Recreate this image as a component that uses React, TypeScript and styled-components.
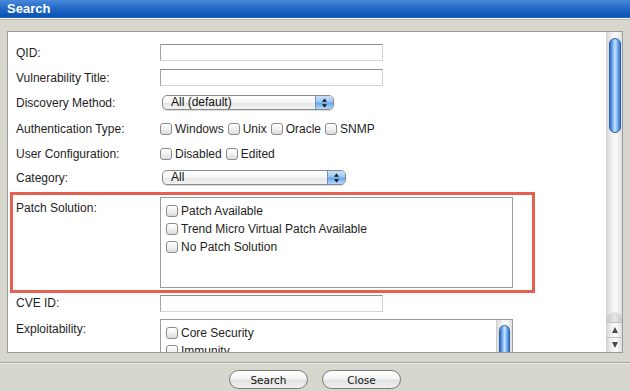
import React from "react";
import styled, { createGlobalStyle } from "styled-components";

const GlobalStyle = createGlobalStyle`
  html, body { margin: 0; padding: 0; background: #d8d7cd; }
  body {
    font-family: "Liberation Sans", Arial, sans-serif;
    font-size: 12px;
    color: #1e1e1e;
  }
`;

const Window = styled.div`
  width: 630px;
  height: 391px;
  display: flex;
  flex-direction: column;
  overflow: hidden;
  background: #d8d7cd;
`;
const TitleBar = styled.div`
  flex: none;
  height: 18px;
  line-height: 18px;
  padding-left: 7px;
  color: #fff;
  font-weight: bold;
  font-size: 13px;
  background: linear-gradient(#4a89d9, #2569c6 45%, #0a54b4 90%, #2b6bc2);
  border-bottom: 1px solid #f4f4f0;
  box-shadow: 0 1px 0 #bdbcb2;
`;
const Body = styled.div`
  flex: none;
  padding: 12px 7px 0;
`;
const Panel = styled.div`
  height: 322px;
  box-sizing: border-box;
  border: 1px solid #9b9b9b;
  background: #fff;
  display: flex;
`;
const Content = styled.div`
  flex: 1;
  overflow: hidden;
  padding-top: 8px;
`;
const Row = styled.div<{ $h: number; $top?: number }>`
  display: flex;
  align-items: center;
  height: ${p => p.$h}px;
  margin-top: ${p => p.$top || 0}px;
  padding-left: 8px;
`;
const TopRow = styled.div<{ $top?: number }>`
  display: flex;
  align-items: flex-start;
  margin-top: ${p => p.$top || 0}px;
  padding-left: 8px;
`;
const Label = styled.div<{ $pad?: number }>`
  width: 144px;
  flex: none;
  line-height: 14px;
  padding-top: ${p => p.$pad || 0}px;
`;
const Highlight = styled.div`
  width: 525px;
  height: 101px;
  box-sizing: border-box;
  margin: 2px 0 0 2px;
  border: 3px solid #e4614f;
  padding: 2px 0 0 3px;
  display: flex;
  align-items: flex-start;
`;
const TextInput = styled.div`
  width: 223px;
  height: 17px;
  box-sizing: border-box;
  border: 1px solid;
  border-color: #8e8e8e #cfcfcf #d4d4d4 #a4a4a4;
  background: #fff;
`;
const Select = styled.div<{ $w: number }>`
  width: ${p => p.$w}px;
  height: 15px;
  box-sizing: border-box;
  margin-left: 2px;
  border: 1px solid #8a8a8a;
  border-radius: 5px;
  display: flex;
  overflow: hidden;
  background: linear-gradient(#ffffff, #f6f6f6 50%, #e6e6e6 55%, #f2f2f2);
  box-shadow: 0 1px 1px rgba(0, 0, 0, 0.15);
`;
const SelectText = styled.span`
  flex: 1;
  padding-left: 8px;
  font-size: 12px;
  line-height: 13px;
  color: #111;
`;
const SelectArrow = styled.span`
  width: 17px;
  flex: none;
  display: flex;
  align-items: center;
  justify-content: center;
  border-left: 1px solid #6f93c6;
  background: linear-gradient(#c9e2fb, #9cc6f3 45%, #6aa6ea 55%, #b3d8ff);
`;
const ListBox = styled.div<{ $h: number }>`
  width: 353px;
  height: ${p => p.$h}px;
  box-sizing: border-box;
  border: 1px solid #9c9c9c;
  background: #fff;
  display: flex;
  overflow: hidden;
`;
const ListItems = styled.div`
  flex: 1;
  padding: 4px 0 0 5px;
`;
const CheckRow = styled.div`
  display: flex;
  align-items: center;
  gap: 4px;
`;
const CheckItem = styled.label<{ $h?: number }>`
  display: flex;
  align-items: center;
  gap: 3px;
  height: ${p => p.$h || 14}px;
  white-space: nowrap;
`;
const Box = styled.span`
  width: 12px;
  height: 12px;
  box-sizing: border-box;
  flex: none;
  border: 1px solid #8b8b8b;
  border-radius: 3px;
  background: linear-gradient(#ffffff, #f1f1f1 50%, #dcdcdc);
  box-shadow: inset 0 1px 0 #fff;
`;
const ScrollTrack = styled.div<{ $w: number }>`
  width: ${p => p.$w}px;
  flex: none;
  display: flex;
  flex-direction: column;
  align-items: center;
  border-left: 1px solid #cfcfcf;
  background: linear-gradient(to right, #d9d9d9, #f3f3f3 35%, #fbfbfb 60%, #dedede);
`;
const Thumb = styled.div<{ $h: number; $top: number; $w: number }>`
  width: ${p => p.$w}px;
  height: ${p => p.$h}px;
  margin-top: ${p => p.$top}px;
  flex: none;
  box-sizing: border-box;
  border: 1px solid #2b5fae;
  border-radius: 6px;
  background: linear-gradient(to right, #2f6cc6, #7fb6f0 30%, #c4e2ff 50%, #86bdf3 70%, #3672c9);
`;
const TrackFill = styled.div`
  flex: 1;
`;
const TrackCap = styled.div`
  width: 100%;
  height: 10px;
  border-radius: 7px 7px 0 0;
  background: linear-gradient(to right, #c8c8c8, #e6e6e6 50%, #cbcbcb);
`;
const ArrowBtn = styled.div<{ $down?: boolean }>`
  width: 100%;
  height: 14px;
  display: flex;
  align-items: center;
  justify-content: center;
  border-top: 1px solid #c2c2c2;
  &::after {
    content: "";
    border-left: 3px solid transparent;
    border-right: 3px solid transparent;
    ${p => (p.$down ? "border-top: 6px solid #4a4a4a;" : "border-bottom: 6px solid #4a4a4a;")}
  }
`;
const Footer = styled.div`
  flex: none;
  margin-top: 9px;
  border-top: 1px solid #a4a39c;
  box-shadow: inset 0 1px 0 #f1f1ec;
  padding-top: 7px;
  display: flex;
  justify-content: center;
  gap: 14px;
`;
const Button = styled.button`
  width: 79px;
  height: 19px;
  padding: 0;
  display: flex;
  align-items: center;
  justify-content: center;
  border: 1px solid #7a7a7a;
  border-radius: 10px;
  background: linear-gradient(#ffffff, #f5f5f5 45%, #e2e2e2 55%, #f0f0f0);
  font-family: "DejaVu Sans", "Liberation Sans", sans-serif;
  font-size: 10.5px;
  color: #111;
  line-height: 12px;
`;

const UpDown = () => (
  <svg width="7" height="10" viewBox="0 0 7 10">
    <path d="M3.5 0.5 L6 3.8 L1 3.8 Z" fill="#111" />
    <path d="M3.5 9.5 L6 6.2 L1 6.2 Z" fill="#111" />
  </svg>
);

const Check = ({ label, h }: { label: string; h?: number }) => (
  <CheckItem $h={h}>
    <Box />
    {label}
  </CheckItem>
);

export default function App() {
  return (
    <Window>
      <GlobalStyle />
      <TitleBar>Search</TitleBar>
      <Body>
        <Panel>
          <Content>
            <Row $h={25}>
              <Label>QID:</Label>
              <TextInput />
            </Row>
            <Row $h={25}>
              <Label>Vulnerability Title:</Label>
              <TextInput />
            </Row>
            <Row $h={25}>
              <Label>Discovery Method:</Label>
              <Select $w={172}>
                <SelectText>All (default)</SelectText>
                <SelectArrow><UpDown /></SelectArrow>
              </Select>
            </Row>
            <Row $h={27}>
              <Label>Authentication Type:</Label>
              <CheckRow>
                <Check label="Windows" />
                <Check label="Unix" />
                <Check label="Oracle" />
                <Check label="SNMP" />
              </CheckRow>
            </Row>
            <Row $h={23}>
              <Label>User Configuration:</Label>
              <CheckRow>
                <Check label="Disabled" />
                <Check label="Edited" />
              </CheckRow>
            </Row>
            <Row $h={25}>
              <Label>Category:</Label>
              <Select $w={184}>
                <SelectText>All</SelectText>
                <SelectArrow><UpDown /></SelectArrow>
              </Select>
            </Row>

            <Highlight>
              <Label $pad={4}>Patch Solution:</Label>
              <ListBox $h={91}>
                <ListItems>
                  <Check label="Patch Available" h={18} />
                  <Check label="Trend Micro Virtual Patch Available" h={18} />
                  <Check label="No Patch Solution" h={18} />
                </ListItems>
              </ListBox>
            </Highlight>

            <Row $h={20}>
              <Label>CVE ID:</Label>
              <TextInput />
            </Row>
            <TopRow $top={6}>
              <Label $pad={3}>Exploitability:</Label>
              <ListBox $h={60}>
                <ListItems>
                  <Check label="Core Security" h={18} />
                  <Check label="Immunity" h={18} />
                  <Check label="Metasploit" h={18} />
                </ListItems>
                <ScrollTrack $w={15}>
                  <Thumb $w={11} $h={60} $top={5} />
                </ScrollTrack>
              </ListBox>
            </TopRow>
          </Content>
          <ScrollTrack $w={15}>
            <Thumb $w={12} $h={95} $top={6} />
            <TrackFill />
            <TrackCap />
            <ArrowBtn />
            <ArrowBtn $down />
          </ScrollTrack>
        </Panel>
      </Body>
      <Footer>
        <Button>Search</Button>
        <Button>Close</Button>
      </Footer>
    </Window>
  );
}
